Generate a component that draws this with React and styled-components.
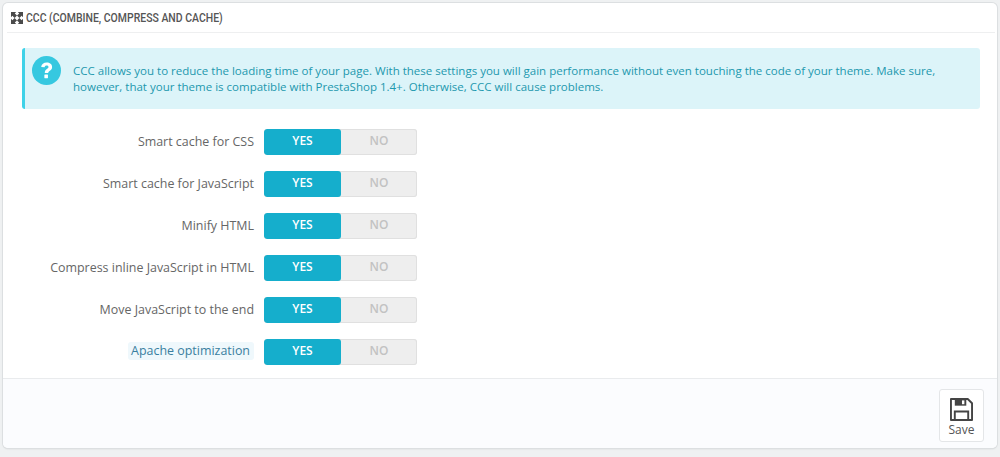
import React from 'react'
import styled, { createGlobalStyle } from 'styled-components'

const GlobalStyle = createGlobalStyle`
  html, body {
    margin: 0;
    padding: 0;
    background: #eff1f2;
    font-family: 'Open Sans', sans-serif;
    font-size: 12px;
    color: #555;
  }
`

const Page = styled.div`
  width: 1000px;
  height: 457px;
  padding: 3px 3px 0;
  box-sizing: border-box;
  overflow: hidden;
`

const Panel = styled.div`
  height: 445px;
  box-sizing: border-box;
  background: #fff;
  border-radius: 5px;
  box-shadow: 0 0 0 1px #dcdfe1, 0 1px 2px rgba(0, 0, 0, 0.12);
  display: flex;
  flex-direction: column;
`

const Heading = styled.div`
  height: 30px;
  box-sizing: border-box;
  margin: 0 2px 0 4px;
  padding-left: 4px;
  border-bottom: 1px solid #eeeff0;
  display: flex;
  align-items: center;
  gap: 3px;
  white-space: nowrap;
`

const HeadingText = styled.span`
  font-family: 'Roboto', sans-serif;
  font-size: 13px;
  font-weight: 500;
  color: #555;
  transform: scaleX(0.805);
  transform-origin: left center;
`

const Body = styled.div`
  flex: 1;
  padding: 15px 17px 0 19px;
`

const Alert = styled.div`
  height: 61px;
  box-sizing: border-box;
  background: #dcf4f9;
  border-left: 3px solid #3ed2e8;
  border-radius: 3px;
  color: #1c98ae;
  font-size: 11.53px;
  line-height: 16px;
  padding: 15px 40px 0 48px;
  position: relative;
`

const AlertIcon = styled.svg`
  position: absolute;
  left: 7px;
  top: 8px;
`

const Form = styled.div`
  margin-top: 20px;
  display: flex;
  flex-direction: column;
  gap: 16px;
`

const Row = styled.div`
  display: flex;
  align-items: center;
  height: 26px;
`

const LabelCell = styled.div`
  width: 232px;
  margin-right: 10px;
  padding-bottom: 2px;
  display: flex;
  justify-content: flex-end;
  white-space: nowrap;
  font-size: 12.45px;
  color: #666;
`

const HintLabel = styled.span`
  background: #eff8fc;
  color: #3a7fa0;
  border-radius: 3px;
  padding: 0 4px 0 3px;
  line-height: 18px;
`

const Toggle = styled.div`
  width: 153px;
  height: 26px;
  display: flex;
  border-radius: 3px;
  background: #eee;
  box-shadow: inset 0 0 0 1px #e0e0e0;
  font-size: 12px;
  line-height: 24px;
  font-weight: 600;
  overflow: hidden;
`

const YesPart = styled.div`
  width: 77px;
  background: #15aecc;
  color: #fff;
  border-radius: 3px;
  display: flex;
  justify-content: center;
`

const NoPart = styled.div`
  flex: 1;
  color: #c2c2c2;
  display: flex;
  justify-content: center;
`

const Footer = styled.div`
  height: 70px;
  box-sizing: border-box;
  border-top: 1px solid #e9ebed;
  border-radius: 0 0 5px 5px;
  background: #fbfcfe;
  display: flex;
  justify-content: flex-end;
  padding: 10px 13px 0 0;
`

const SaveButton = styled.button`
  width: 45px;
  height: 53px;
  box-sizing: border-box;
  background: #fff;
  border: 1px solid #e4e6e8;
  border-radius: 3px;
  padding: 8px 0 0;
  display: flex;
  flex-direction: column;
  align-items: center;
  gap: 0;
  font-family: 'Open Sans', sans-serif;
  font-size: 12px;
  color: #555;
`

const rows = [
  'Smart cache for CSS',
  'Smart cache for JavaScript',
  'Minify HTML',
  'Compress inline JavaScript in HTML',
  'Move JavaScript to the end',
]

const corner = 'M0 0h5.6L4.1 1.5 6.5 3.9 3.9 6.5 1.5 4.1 0 5.6z'

const ExpandIcon = () => (
  <svg width="12" height="12" viewBox="0 0 13 13" fill="#4a4a4a">
    <path d={corner} />
    <path d={corner} transform="matrix(-1 0 0 1 13 0)" />
    <path d={corner} transform="matrix(1 0 0 -1 0 13)" />
    <path d={corner} transform="matrix(-1 0 0 -1 13 13)" />
  </svg>
)

const QuestionIcon = () => (
  <AlertIcon width="29" height="29" viewBox="0 0 30 30">
    <circle cx="15" cy="15" r="15" fill="#36c8e0" />
    <path d="M9.5 11.5c.3-3 2.6-4.7 5.7-4.7 3.2 0 5.6 1.8 5.6 4.6 0 2.2-1.3 3.2-2.6 4.1-1 .7-1.4 1.1-1.4 2.2h-3.6c0-2.2.8-3.2 2.2-4.2 1-.7 1.7-1.2 1.7-2.1 0-1-.8-1.6-1.9-1.6-1.2 0-2 .7-2.2 1.9z" fill="#fff" />
    <rect x="12.8" y="19.2" width="3.7" height="3.7" rx="0.4" fill="#fff" />
  </AlertIcon>
)

const SaveIcon = () => (
  <svg width="23" height="23" viewBox="0 0 24 24" fill="none" stroke="#444" strokeWidth="2">
    <path d="M1 1h17.5L23 5.5V23H1z" strokeLinejoin="round" />
    <path d="M5 23v-9h14v9" />
    <rect x="5" y="1" width="12" height="7" fill="#444" stroke="none" />
    <rect x="12.5" y="2.5" width="2.5" height="4" fill="#fff" stroke="none" />
  </svg>
)

const YesNo = () => (
  <Toggle>
    <YesPart>YES</YesPart>
    <NoPart>NO</NoPart>
  </Toggle>
)

const App = () => {
  return (
    <Page>
      <GlobalStyle />
      <Panel>
        <Heading>
          <ExpandIcon />
          <HeadingText>CCC (COMBINE, COMPRESS AND CACHE)</HeadingText>
        </Heading>
        <Body>
          <Alert>
            <QuestionIcon />
            CCC allows you to reduce the loading time of your page. With these settings you will gain performance without even touching the code of your theme. Make sure, however, that your theme is compatible with PrestaShop 1.4+. Otherwise, CCC will cause problems.
          </Alert>
          <Form>
            {rows.map((label) => (
              <Row key={label}>
                <LabelCell>{label}</LabelCell>
                <YesNo />
              </Row>
            ))}
            <Row>
              <LabelCell>
                <HintLabel>Apache optimization</HintLabel>
              </LabelCell>
              <YesNo />
            </Row>
          </Form>
        </Body>
        <Footer>
          <SaveButton>
            <SaveIcon />
            Save
          </SaveButton>
        </Footer>
      </Panel>
    </Page>
  )
}

export default App
